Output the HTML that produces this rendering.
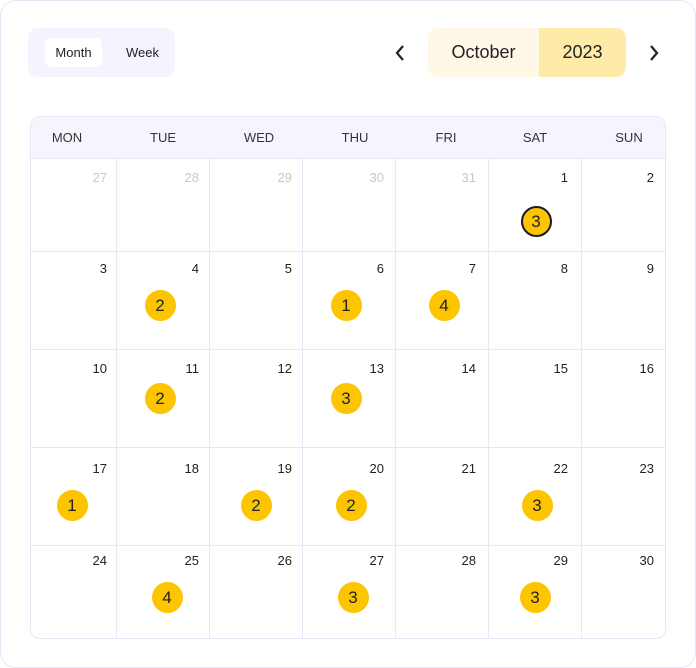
<!DOCTYPE html><html><head><style>
body{margin:0;width:696px;height:668px;background:#fff;font-family:"Liberation Sans",sans-serif;position:relative;overflow:hidden}
.card{position:absolute;left:0;top:0;width:694px;height:666px;border:1px solid #e9e7f7;border-radius:16px}
.a{position:absolute}
.tog{left:28px;top:28px;width:147px;height:49px;background:#f5f3fe;border-radius:10px}
.mon{left:45px;top:38px;width:57px;height:29px;background:#fff;border-radius:6px;font-size:13px;color:#222;text-align:center;line-height:29px}
.wk{left:126px;top:38px;font-size:13px;color:#222;line-height:29px}
.my{left:428px;top:28px;width:198px;height:49px;border-radius:10px;overflow:hidden;display:flex;font-size:18px;color:#222}
.my div{display:flex;align-items:center;justify-content:center}
.tbl{left:30px;top:116px;width:634px;height:521px;border:1px solid #e9e7f7;border-radius:10px;overflow:hidden}
.hd{position:absolute;top:0;width:80px;height:42px;line-height:42px;font-size:13px;color:#333;text-align:center}
.vl{position:absolute;top:42px;bottom:0;width:1px;background:#e9e7f7}
.hl{position:absolute;left:0;right:0;height:1px;background:#e9e7f7}
.n{position:absolute;font-size:13px;color:#222;text-align:right;width:40px}
.g{color:#c8c8c8}
.b{position:absolute;width:31px;height:31px;border-radius:50%;background:#fdc500;font-size:17px;color:#222;text-align:center;line-height:31px}
</style></head><body>
<div class="card"></div>
<div class="a tog"></div><div class="a mon">Month</div><div class="a wk">Week</div>
<svg class="a" style="left:393px;top:43px" width="14" height="20"><path d="M10 3 L4 10 L10 17" stroke="#222" stroke-width="2.2" fill="none"/></svg>
<div class="a my"><div style="width:111px;background:#fff8e7">October</div><div style="width:87px;background:#ffeba8">2023</div></div>
<svg class="a" style="left:647px;top:43px" width="14" height="20"><path d="M4 3 L10 10 L4 17" stroke="#222" stroke-width="2.2" fill="none"/></svg>
<div class="a tbl">
<div style="position:absolute;left:0;right:0;top:0;height:42px;background:#f6f5fe"></div>
<div class="hd" style="left:-4px">MON</div>
<div class="hd" style="left:92px">TUE</div>
<div class="hd" style="left:188px">WED</div>
<div class="hd" style="left:284px">THU</div>
<div class="hd" style="left:375px">FRI</div>
<div class="hd" style="left:464px">SAT</div>
<div class="hd" style="left:558px">SUN</div>
<div class="hl" style="top:41px"></div><div class="hl" style="top:134px"></div><div class="hl" style="top:232px"></div><div class="hl" style="top:330px"></div><div class="hl" style="top:428px"></div>
<div class="vl" style="left:85px"></div><div class="vl" style="left:178px"></div><div class="vl" style="left:271px"></div><div class="vl" style="left:364px"></div><div class="vl" style="left:457px"></div><div class="vl" style="left:550px"></div>
</div>
<div id="nums"></div>
<script>
var right=[107,199,292,384,476,568,654],rows=[178,269,369,469,561];
var d=[[27,28,29,30,31,1,2],[3,4,5,6,7,8,9],[10,11,12,13,14,15,16],[17,18,19,20,21,22,23],[24,25,26,27,28,29,30]];
var h='';
for(var r=0;r<5;r++)for(var c=0;c<7;c++){h+='<div class="n'+(r==0&&c<5?' g':'')+'" style="left:'+(right[c]-40)+'px;top:'+(rows[r]-8)+'px">'+d[r][c]+'</div>';}
var b=[[536,221,3],[160,305,2],[346,305,1],[444,305,4],[160,398,2],[346,398,3],[72,505,1],[256,505,2],[351,505,2],[537,505,3],[167,597,4],[353,597,3],[535,597,3]];
b.forEach(function(x,i){h+='<div class="b" style="left:'+(x[0]-15.5)+'px;top:'+(x[1]-15.5)+'px'+(i==0?';box-sizing:border-box;border:2px solid #1a1a2a;line-height:27px':'')+'">'+x[2]+'</div>';});
document.getElementById('nums').innerHTML=h;
</script>
</body></html>
